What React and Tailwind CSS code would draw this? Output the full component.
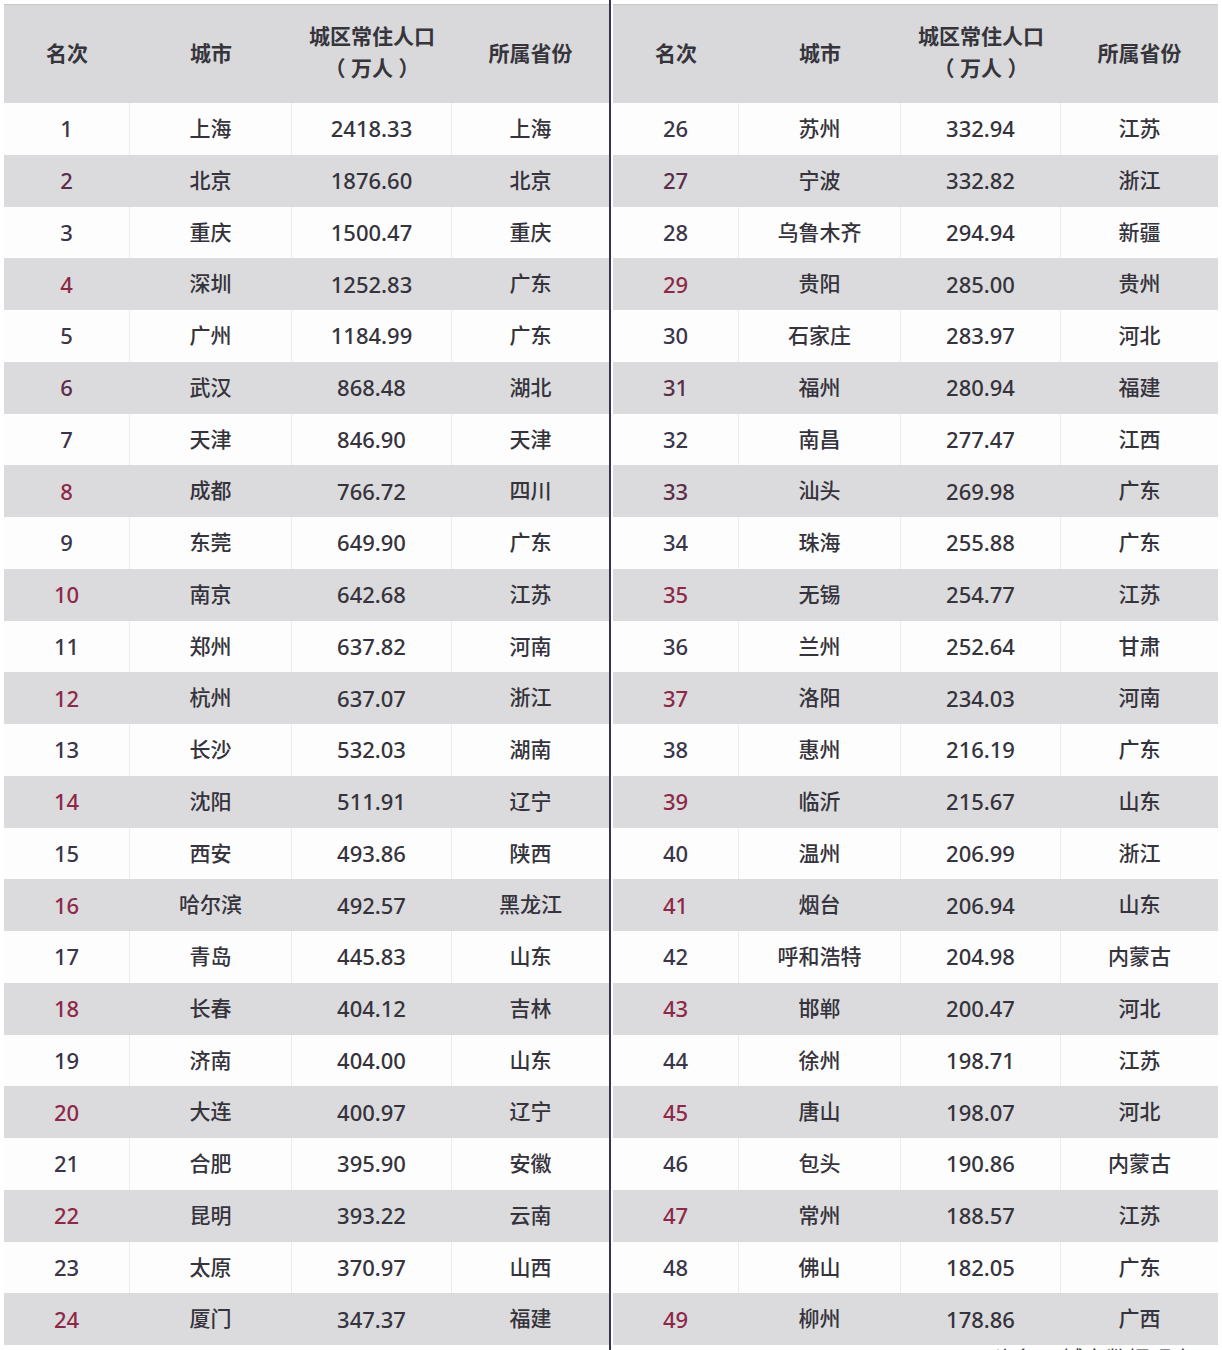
const left = [
  [1, "上海", "2418.33", "上海"],
  [2, "北京", "1876.60", "北京"],
  [3, "重庆", "1500.47", "重庆"],
  [4, "深圳", "1252.83", "广东"],
  [5, "广州", "1184.99", "广东"],
  [6, "武汉", "868.48", "湖北"],
  [7, "天津", "846.90", "天津"],
  [8, "成都", "766.72", "四川"],
  [9, "东莞", "649.90", "广东"],
  [10, "南京", "642.68", "江苏"],
  [11, "郑州", "637.82", "河南"],
  [12, "杭州", "637.07", "浙江"],
  [13, "长沙", "532.03", "湖南"],
  [14, "沈阳", "511.91", "辽宁"],
  [15, "西安", "493.86", "陕西"],
  [16, "哈尔滨", "492.57", "黑龙江"],
  [17, "青岛", "445.83", "山东"],
  [18, "长春", "404.12", "吉林"],
  [19, "济南", "404.00", "山东"],
  [20, "大连", "400.97", "辽宁"],
  [21, "合肥", "395.90", "安徽"],
  [22, "昆明", "393.22", "云南"],
  [23, "太原", "370.97", "山西"],
  [24, "厦门", "347.37", "福建"],
];

const right = [
  [26, "苏州", "332.94", "江苏"],
  [27, "宁波", "332.82", "浙江"],
  [28, "乌鲁木齐", "294.94", "新疆"],
  [29, "贵阳", "285.00", "贵州"],
  [30, "石家庄", "283.97", "河北"],
  [31, "福州", "280.94", "福建"],
  [32, "南昌", "277.47", "江西"],
  [33, "汕头", "269.98", "广东"],
  [34, "珠海", "255.88", "广东"],
  [35, "无锡", "254.77", "江苏"],
  [36, "兰州", "252.64", "甘肃"],
  [37, "洛阳", "234.03", "河南"],
  [38, "惠州", "216.19", "广东"],
  [39, "临沂", "215.67", "山东"],
  [40, "温州", "206.99", "浙江"],
  [41, "烟台", "206.94", "山东"],
  [42, "呼和浩特", "204.98", "内蒙古"],
  [43, "邯郸", "200.47", "河北"],
  [44, "徐州", "198.71", "江苏"],
  [45, "唐山", "198.07", "河北"],
  [46, "包头", "190.86", "内蒙古"],
  [47, "常州", "188.57", "江苏"],
  [48, "佛山", "182.05", "广东"],
  [49, "柳州", "178.86", "广西"],
];

// 灰行里名次颜色偏暗红，几个偏深
const darkRanks = new Set([2, 6, 27, 31, 33]);

const Table = ({ rows }) => (
  <div className="w-[605px]">
    <div className="grid h-[98px] grid-cols-[126px_162px_160px_1fr] items-center bg-[#d9d9db] text-center text-[21px] font-bold text-[#36353c]">
      <div>名次</div>
      <div>城市</div>
      <div className="-mt-[4px] leading-[32px]">
        城区常住人口
        <br />（ 万人 ）
      </div>
      <div>所属省份</div>
    </div>
    {rows.map(([rank, city, pop, prov], i) => {
      const gray = i % 2 === 1;
      const sep = gray ? "border-[#dbdbdd]" : "border-[#ececec]";
      return (
        <div
          key={rank}
          className={`grid h-[51.75px] grid-cols-[126px_162px_160px_1fr] items-center text-center text-[21px] font-medium text-[#35333c] ${
            gray ? "bg-[#dbdbdd]" : "bg-[#fdfdfd]"
          }`}
        >
          <div
            className={`flex h-full items-center justify-center border-r text-[22px] ${sep} ${
              gray ? (darkRanks.has(rank) ? "text-[#5a2d4a]" : "text-[#8e2848]") : "text-[#3a3548]"
            }`}
          >
            {rank}
          </div>
          <div className={`flex h-full items-center justify-center border-r ${sep}`}>{city}</div>
          <div className={`flex h-full items-center justify-center border-r text-[22px] ${sep}`}>{pop}</div>
          <div className="flex h-full items-center justify-center">{prov}</div>
        </div>
      );
    })}
  </div>
);

export default function App() {
  return (
    <div
      className="h-[1350px] w-[1222px] overflow-hidden bg-white"
      style={{ fontFamily: '"Noto Sans", "Noto Sans CJK SC", sans-serif' }}
    >
      <div className="flex">
        <div className="pl-[4px] pt-[4px]">
          <div className="border-t border-[#c8c8c8]">
            <Table rows={left} />
          </div>
        </div>
        <div className="h-[1350px] w-[2px] bg-[#3b2f52]" />
        <div className="pl-[2px] pt-[4px]">
          <div className="border-t border-[#c8c8c8]">
            <Table rows={right} />
          </div>
          <div className="flex justify-end pr-[24px] pt-[2px] text-[22px] leading-none text-[#333]">
            头条 @城市数据观察
          </div>
        </div>
      </div>
    </div>
  );
}
